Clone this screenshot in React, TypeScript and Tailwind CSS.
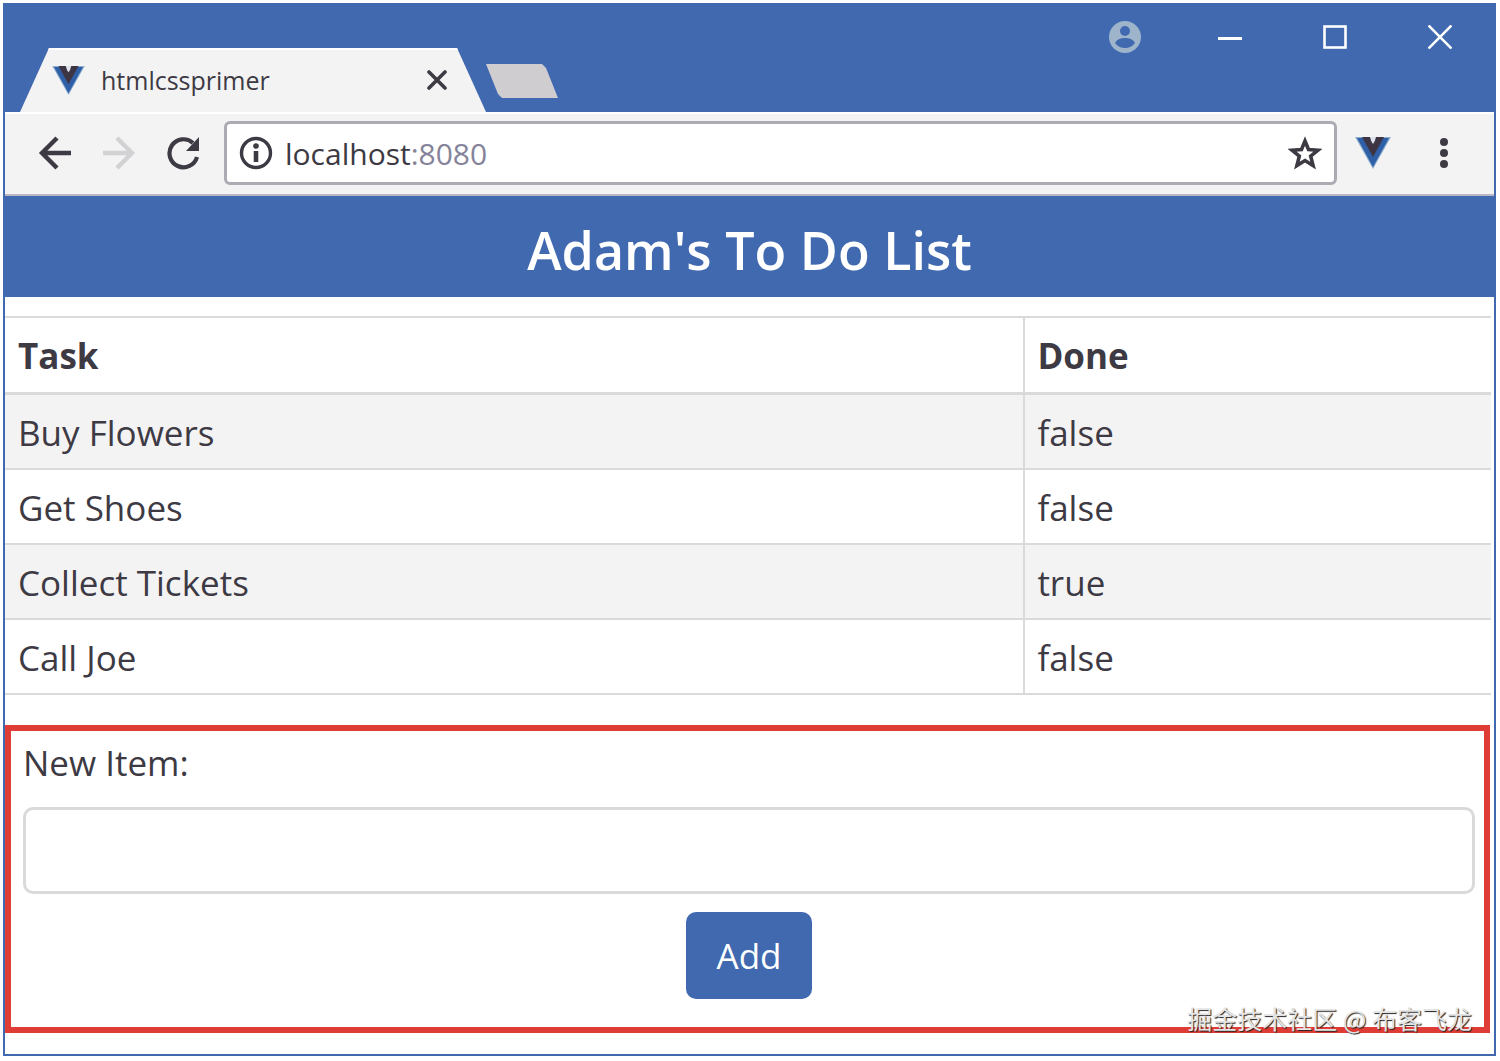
import { useState, type FormEvent } from "react";

type TodoItem = { action: string; done: boolean };

const INITIAL_ITEMS: TodoItem[] = [
  { action: "Buy Flowers", done: false },
  { action: "Get Shoes", done: false },
  { action: "Collect Tickets", done: true },
  { action: "Call Joe", done: false },
];

function VueLogo({ className }: { className?: string }) {
  return (
    <svg viewBox="0 0 36 32" className={className} aria-hidden="true">
      <path d="M0 0h36L18 32z" fill="#8fb0cf" />
      <path d="M2 1h32L18 30z" fill="#2f5fa6" />
      <path d="M7 0h22L18 20z" fill="#3d3543" />
      <path d="M15 0h6q-1 5-3 7-2-2-3-7z" fill="#dfe3ec" />
    </svg>
  );
}

function TitleBar() {
  return (
    <div className="flex h-[107px] items-end justify-between bg-[#4069b0] pl-[15px]">
      <div className="flex min-w-0 items-end">
        <div className="flex h-16 w-[466px] items-center border-t-2 border-white bg-[#f4f3f4] pr-[37px] pb-0.5 pl-8 [clip-path:polygon(29px_0,calc(100%-29px)_0,100%_100%,0_100%)]">
          <VueLogo className="h-[29px] w-[33px]" />
          <span className="ml-4 flex-1 text-[25px] leading-8">htmlcssprimer</span>
          <button type="button" aria-label="Close tab" className="flex w-6 justify-center">
            <svg viewBox="0 0 20 20" className="size-5" stroke="#3d3a44" strokeWidth="3.6" strokeLinecap="round">
              <path d="M2 2l16 16M18 2L2 18" />
            </svg>
          </button>
        </div>
        <button
          type="button"
          aria-label="New tab"
          className="mb-[14px] h-[34px] w-[72px] bg-[#cfcdd0] [clip-path:polygon(0_0,56px_0,60px_4px,100%_100%,16px_100%,12px_30px)]"
        />
      </div>

      <div className="flex h-16 self-start pr-[2px]">
        <button type="button" aria-label="Profile" className="flex w-[105px] items-center justify-center">
          <svg viewBox="0 0 32 32" className="size-8" aria-hidden="true">
            <circle cx="16" cy="16" r="16" fill="#9db4cb" />
            <circle cx="16" cy="10" r="5" fill="#4069b0" />
            <path d="M6 22c2-4 6-5 10-5s8 1 10 5c-2 3-6 5-10 5s-8-2-10-5z" fill="#4069b0" />
          </svg>
        </button>
        <button type="button" aria-label="Minimize" className="flex w-[105px] items-center justify-center">
          <svg viewBox="0 0 24 24" className="size-6" stroke="#fff" strokeWidth="3">
            <path d="M0 13.5h24" />
          </svg>
        </button>
        <button type="button" aria-label="Maximize" className="flex w-[105px] items-center justify-center">
          <svg viewBox="0 0 24 24" className="size-6" fill="none" stroke="#fff" strokeWidth="2.6">
            <rect x="1.5" y="1.5" width="21" height="21" />
          </svg>
        </button>
        <button type="button" aria-label="Close" className="flex w-[105px] items-center justify-center">
          <svg viewBox="0 0 24 24" className="size-6" stroke="#fff" strokeWidth="2.6">
            <path d="M.5.5l23 23M23.5.5l-23 23" />
          </svg>
        </button>
      </div>
    </div>
  );
}

function Toolbar() {
  return (
    <div className="flex h-[84px] items-center border-t-2 border-b-2 border-t-white border-b-[#b9b8c4] bg-[#f4f3f4] pb-0.5">
      <div className="flex pl-[18px]">
        <button type="button" aria-label="Back" className="flex w-16 justify-center">
          <svg viewBox="0 0 34 34" className="size-[34px]" fill="none" stroke="#3d3a44" strokeWidth="4.4">
            <path d="M33 17H4M19 2L4 17l15 15" />
          </svg>
        </button>
        <button type="button" aria-label="Forward" className="flex w-16 justify-center">
          <svg viewBox="0 0 34 34" className="size-[34px]" fill="none" stroke="#d2d1d3" strokeWidth="4.4">
            <path d="M1 17h29M15 2l15 15-15 15" />
          </svg>
        </button>
        <button type="button" aria-label="Reload" className="flex w-16 justify-center">
          <svg viewBox="0 0 34 34" className="size-[34px]" fill="none">
            <path d="M31 21A14 14 0 1 1 27 7" stroke="#3d3a44" strokeWidth="4.2" />
            <path d="M33 1v14H20z" fill="#3d3a44" />
          </svg>
        </button>
      </div>

      <div className="ml-[9px] flex h-16 min-w-0 flex-1 items-center rounded-md border-3 border-[#acabb3] bg-white px-3">
        <svg viewBox="0 0 34 34" className="size-[34px] shrink-0" fill="none" aria-hidden="true">
          <circle cx="17" cy="17" r="14.5" stroke="#3d3a44" strokeWidth="3.4" />
          <path d="M17 15v11" stroke="#3d3a44" strokeWidth="4.6" />
          <circle cx="17" cy="10" r="2.8" fill="#3d3a44" />
        </svg>
        <div className="ml-3 flex-1 pt-0.5 text-[30px] leading-10">
          localhost<span className="text-[#85839a]">:8080</span>
        </div>
        <button type="button" aria-label="Bookmark this page">
          <svg viewBox="0 0 34 34" className="size-[34px]" fill="none" stroke="#3d3a44" strokeWidth="3.6">
            <path d="M17 5l3.5 8.5 9.5.7-7.3 6 2.4 9.3-8.1-5-8.1 5 2.4-9.3-7.3-6 9.5-.7z" />
          </svg>
        </button>
      </div>

      <button type="button" aria-label="Vue devtools" className="ml-[18px]">
        <VueLogo className="h-8 w-9" />
      </button>
      <button type="button" aria-label="Menu" className="mr-[45px] ml-12">
        <svg viewBox="0 0 10 32" className="h-8 w-[10px]" fill="#3d3a44">
          <circle cx="5" cy="5" r="4" />
          <circle cx="5" cy="16" r="4" />
          <circle cx="5" cy="27" r="4" />
        </svg>
      </button>
    </div>
  );
}

export default function App() {
  const [items, setItems] = useState(INITIAL_ITEMS);
  const [newItem, setNewItem] = useState("");

  const addItem = (e: FormEvent) => {
    e.preventDefault();
    if (!newItem.trim()) return;
    setItems([...items, { action: newItem.trim(), done: false }]);
    setNewItem("");
  };

  return (
    <div className="flex min-h-screen flex-col bg-white pt-[3px] pr-1 pb-[5px] pl-[3px] font-['Open_Sans','Noto_Sans',sans-serif] text-[#3d3a44]">
      <div className="relative flex-1 border-2 border-[#4069b0]">
        <TitleBar />
        <Toolbar />

        <h1 className="bg-[#4069b0] pt-5 pb-[13px] text-center text-[52px] leading-[68px] font-semibold text-white">
          Adam's To Do List
        </h1>

        <div className="mt-[19px] pr-[3px]">
          <table className="w-full table-fixed border-collapse text-left text-[35px] leading-[48px]">
            <thead>
              <tr className="border-t-2 border-b-3 border-[#dadadc]">
                <th className="w-[68.6%] border-r-2 border-[#dadadc] px-[13px] pt-[14px] pb-3 font-bold">Task</th>
                <th className="px-3 pt-[14px] pb-3 font-bold">Done</th>
              </tr>
            </thead>
            <tbody>
              {items.map((item) => (
                <tr key={item.action} className="border-b-2 border-[#dadadc] odd:bg-[#f4f3f4]">
                  <td className="border-r-2 border-[#dadadc] px-[13px] pt-[14px] pb-[11px]">{item.action}</td>
                  <td className="px-3 pt-[14px] pb-[11px]">{String(item.done)}</td>
                </tr>
              ))}
            </tbody>
          </table>
        </div>

        <form onSubmit={addItem} className="mt-[30px] mr-1 border-6 border-[#e03c36] pt-2 pr-[9px] pb-7 pl-3">
          <label htmlFor="new-item" className="block text-[35px] leading-[48px]">
            New Item:
          </label>
          <input
            id="new-item"
            value={newItem}
            onChange={(e) => setNewItem(e.target.value)}
            className="mt-5 block h-[87px] w-full rounded-[10px] border-3 border-[#dadadc] bg-white px-4 text-[35px]"
          />
          <div className="mt-[18px] flex justify-center">
            <button type="submit" className="h-[87px] rounded-[10px] bg-[#4069b0] px-[31px] text-[35px] leading-[48px] text-white">
              Add
            </button>
          </div>
        </form>

        <p className="absolute right-[22px] bottom-5 font-['Noto_Sans_CJK_SC',sans-serif] text-[25px] leading-8 text-[#e4e4e4] [text-shadow:1px_1px_1px_#222]">
          掘金技术社区 @ 布客飞龙
        </p>
      </div>
    </div>
  );
}
